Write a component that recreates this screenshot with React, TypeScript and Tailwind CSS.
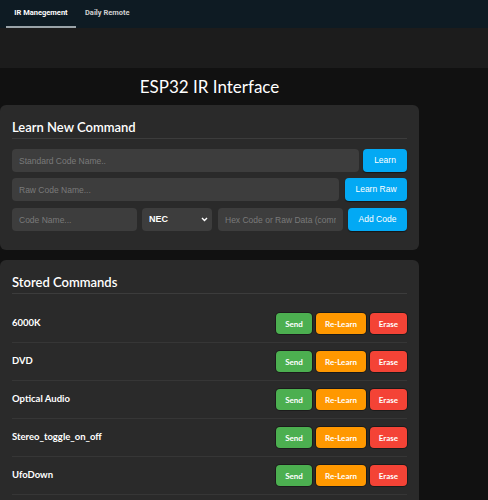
import React, { useState } from 'react';

const commands = ['6000K', 'DVD', 'Optical Audio', 'Stereo_toggle_on_off', 'UfoDown', 'UfoUp'];

const inputCls =
  "block h-[23px] rounded-[4px] bg-[#3d3d3d] px-[7px] text-[8.5px] text-white placeholder:text-[#7a7a7a] outline-none font-['Liberation_Sans',Arial,sans-serif]";
const blueBtn =
  "h-[23px] whitespace-nowrap rounded-[4px] bg-[#03a9f4] text-[8.5px] text-white shadow-[0_1px_1px_rgba(0,0,0,0.5)] font-['Liberation_Sans',Arial,sans-serif] shrink-0";

export default function App() {
  const [tab, setTab] = useState<'ir' | 'daily'>('ir');

  return (
    <div className="min-h-screen bg-[#111111] font-['Lato',sans-serif] text-white">
      {/* Tabs */}
      <div className="flex h-[28px] items-stretch bg-[#0e1b23] pl-[6px]">
        <button
          onClick={() => setTab('ir')}
          className={`w-[70px] border-b-2 text-[7.5px] font-bold font-['Roboto',sans-serif] ${
            tab === 'ir' ? 'border-[#9aa3a8] text-white' : 'border-transparent text-[#d0d0d0]'
          }`}
        >
          IR Manegement
        </button>
        <button
          onClick={() => setTab('daily')}
          className={`px-[9px] border-b-2 text-[7.5px] font-bold font-['Roboto',sans-serif] ${
            tab === 'daily' ? 'border-[#9aa3a8] text-white' : 'border-transparent text-[#d0d0d0]'
          }`}
        >
          Daily Remote
        </button>
      </div>
      <div className="h-[40px] bg-[#1c1c1c]" />

      <div className="w-[419px]">
        <h1 className="mt-[8px] text-center text-[17px] leading-[22px] text-white">ESP32 IR Interface</h1>

        {/* Learn card */}
        <div className="mt-[7px] rounded-[6px] bg-[#2a2a2a] px-[12px] pt-[12px] pb-[19px]">
          <h2 className="border-b border-[#3c3c3c] pb-[1px] text-[13px] font-semibold leading-[20px]">
            Learn New Command
          </h2>
          <div className="mt-[10px] flex flex-col gap-[6px]">
            <div className="flex gap-[4px]">
              <input className={`${inputCls} flex-1 min-w-0`} placeholder="Standard Code Name.." />
              <button className={`${blueBtn} w-[44px]`}>Learn</button>
            </div>
            <div className="flex gap-[6px]">
              <input className={`${inputCls} flex-1 min-w-0`} placeholder="Raw Code Name..." />
              <button className={`${blueBtn} w-[62px]`}>Learn Raw</button>
            </div>
            <div className="mt-[1px] flex gap-[5px]">
              <input className={`${inputCls} w-[125px]`} placeholder="Code Name..." />
              <div className="relative w-[71px]">
                <select className={`${inputCls} w-full appearance-none font-bold text-[9px]`} defaultValue="NEC">
                  <option>NEC</option>
                  <option>SONY</option>
                  <option>RC5</option>
                  <option>RAW</option>
                </select>
                <svg
                  className="pointer-events-none absolute right-[4px] top-[9px]"
                  width="7"
                  height="5"
                  viewBox="0 0 7 5"
                >
                  <path d="M1 1 L3.5 3.5 L6 1" stroke="white" strokeWidth="1.4" fill="none" />
                </svg>
              </div>
              <input className={`${inputCls} w-[125px] ml-[1px]`} placeholder="Hex Code or Raw Data (comma separated)" />
              <button className={`${blueBtn} w-[59px]`}>Add Code</button>
            </div>
          </div>
        </div>

        {/* Stored commands */}
        <div className="mt-[10px] rounded-[6px] bg-[#2a2a2a] px-[12px] pt-[12px] pb-[12px]">
          <h2 className="border-b border-[#3c3c3c] pb-[1px] text-[13px] font-semibold leading-[20px]">
            Stored Commands
          </h2>
          <div className="mt-[11px]">
            {commands.map((c) => (
              <div key={c} className="flex items-center justify-between border-b border-[#363636] py-[8px]">
                <span className="text-[9.5px] font-bold">{c}</span>
                <div className="flex gap-[4px] text-[8px] font-bold">
                  <button className="h-[21px] w-[36px] rounded-[4px] bg-[#4caf50] shadow-[0_0_0_1px_rgba(0,0,0,0.35)]">
                    Send
                  </button>
                  <button className="h-[21px] w-[50px] rounded-[4px] bg-[#ff9800] shadow-[0_0_0_1px_rgba(0,0,0,0.35)]">
                    Re-Learn
                  </button>
                  <button className="h-[21px] w-[37px] rounded-[4px] bg-[#f44336] shadow-[0_0_0_1px_rgba(0,0,0,0.35)]">
                    Erase
                  </button>
                </div>
              </div>
            ))}
          </div>
        </div>
      </div>
    </div>
  );
}
